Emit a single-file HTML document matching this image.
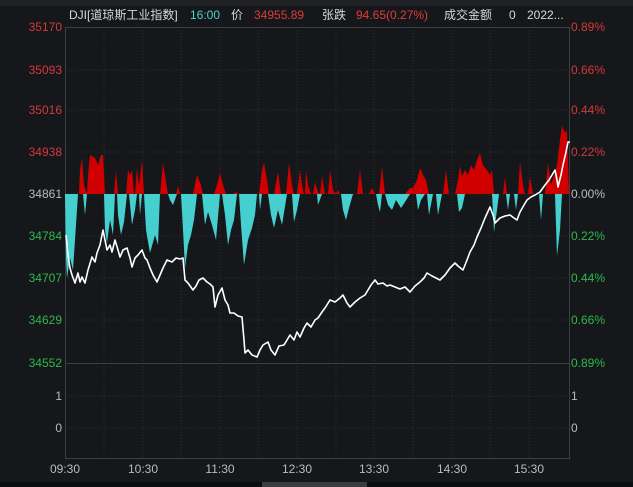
<!DOCTYPE html><html><head><meta charset="utf-8"><style>
body{margin:0;width:633px;height:487px;background:#15171b;overflow:hidden;font-family:"Liberation Sans","Noto Sans CJK SC",sans-serif;}
svg{position:absolute;left:0;top:0}
</style></head><body>
<svg width="633" height="487" viewBox="0 0 633 487" font-family="Liberation Sans, Noto Sans CJK SC, sans-serif" font-size="12">
<rect x="0" y="0" width="633" height="6" fill="#1e2024"/>
<rect x="0" y="482" width="633" height="5" fill="#0c0d0f"/>
<rect x="262" y="482" width="105" height="5" fill="#3a3c40"/>
<g stroke="#2c3036" stroke-dasharray="1 2" stroke-width="1">
<line x1="65" y1="70" x2="569" y2="70"/><line x1="65" y1="110" x2="569" y2="110"/><line x1="65" y1="152" x2="569" y2="152"/><line x1="65" y1="194" x2="569" y2="194"/><line x1="65" y1="236" x2="569" y2="236"/><line x1="65" y1="278" x2="569" y2="278"/><line x1="65" y1="320" x2="569" y2="320"/><line x1="65" y1="396" x2="569" y2="396"/><line x1="65" y1="428" x2="569" y2="428"/>
<line x1="104" y1="27" x2="104" y2="459"/><line x1="143" y1="27" x2="143" y2="459"/><line x1="181" y1="27" x2="181" y2="459"/><line x1="220" y1="27" x2="220" y2="459"/><line x1="258" y1="27" x2="258" y2="459"/><line x1="297" y1="27" x2="297" y2="459"/><line x1="336" y1="27" x2="336" y2="459"/><line x1="374" y1="27" x2="374" y2="459"/><line x1="413" y1="27" x2="413" y2="459"/><line x1="452" y1="27" x2="452" y2="459"/><line x1="490" y1="27" x2="490" y2="459"/><line x1="529" y1="27" x2="529" y2="459"/>
</g>
<rect x="65.5" y="27.5" width="504" height="431" fill="none" stroke="#3a3e45"/>
<line x1="65" y1="363.5" x2="569" y2="363.5" stroke="#3a3e45"/>
<polygon fill="#d00000" points="79,194 80,170 82,158 84,185 87,194 88,175 90,155 95,158 98,165 101,155 103,155 105,194 114,194 116,170 118,194 126,194 128,170 130,175 132,170 134,194 135,194 137,168 139,185 142,160 144,194 160,194 163,163 166,182 168,194 176,194 178,186 180,194 193,194 197,175 201,185 203,194 214,194 217,185 220,173 223,185 226,194 233,194 236,192 239,194 259,194 262,170 264,163 267,180 269,194 274,194 278,172 281,194 286,194 289,163 292,185 294,194 297,194 300,170 302,185 304,194 305,194 306,170 308,185 311,194 313,194 315,182 318,192 320,194 322,176 325,194 328,194 330,170 333,190 336,194 338,190 340,194 357,194 360,170 363,194 369,194 372,188 375,194 379,194 382,167 385,194 405,194 410,188 413,188 417,180 420,168 423,175 426,180 429,194 443,194 446,170 449,194 455,194 458,180 460,166 462,176 465,170 468,175 471,165 474,170 477,160 480,153 483,165 487,170 490,175 492,170 494,194 503,194 505,177 507,194 518,194 520,162 523,185 525,194 528,194 530,177 533,194 545,194 548,163 551,185 554,176 557,165 560,140 562,126 565,133 567,130 569,194"/>
<polygon fill="#45cfcf" points="65,194 66,260 67,278 70,258 73,270 75,240 78,194 83,194 85,215 87,194 104,194 105,230 107,243 110,220 113,235 115,194 117,194 118,215 121,235 124,222 127,194 129,194 132,225 135,210 137,194 139,194 140,215 142,194 144,194 146,230 150,253 155,235 158,245 160,194 168,194 170,200 173,205 177,194 181,194 183,230 185,268 188,245 191,235 194,220 197,194 202,194 205,225 208,212 212,225 216,240 220,194 222,194 225,215 228,245 231,230 234,220 237,194 239,194 241,225 244,265 248,240 252,228 255,215 257,194 259,194 260,210 262,194 268,194 271,215 274,228 278,210 282,225 287,194 292,194 294,222 297,210 300,194 317,194 318,205 322,194 341,194 343,210 346,220 349,208 353,194 376,194 378,205 380,212 382,194 385,194 388,205 392,210 396,200 401,208 405,202 410,194 416,194 418,210 421,200 425,194 427,194 429,215 433,194 436,194 438,215 442,194 457,194 459,212 462,208 465,194 492,194 494,232 497,210 499,194 506,194 508,210 510,194 514,194 516,210 518,194 539,194 541,220 543,194 555,194 557,256 560,230 562,194"/>
<polyline fill="none" stroke="#ffffff" stroke-width="1.6" stroke-linejoin="round" points="66,235 68,255 70,268 72,275 75,283 78,273 80,282 82,277 85,283 88,270 92,257 95,262 97,253 100,245 103,230 105,240 107,250 110,245 112,252 115,240 118,250 120,257 123,250 127,248 130,258 132,267 135,258 138,255 142,250 145,258 147,260 150,268 153,275 157,282 160,275 163,268 167,260 172,262 176,258 180,259 183,258 185,280 188,283 193,290 196,286 199,280 203,278 207,282 210,284 213,287 215,307 218,295 222,288 225,300 228,305 230,313 234,313 238,316 242,317 244,340 245,353 248,350 252,355 257,357 260,350 263,345 268,342 271,350 275,355 279,346 284,345 290,335 294,340 297,332 300,337 304,328 307,323 311,327 315,320 318,318 322,312 325,308 330,300 335,302 340,298 343,295 347,303 350,307 355,302 360,298 365,295 368,290 371,285 375,280 378,284 383,283 387,286 390,285 395,287 400,289 405,287 410,292 415,286 420,282 424,278 427,273 432,276 436,278 440,280 445,275 450,268 455,263 458,266 463,270 467,260 470,252 474,245 477,237 481,228 485,218 490,207 493,215 495,223 500,218 505,216 510,215 514,218 517,220 520,212 524,205 527,200 531,197 535,195 540,192 545,185 549,180 552,175 555,170 557,180 558,187 561,175 563,165 566,152 568,142 570,142"/>
<g font-size="12">
<text x="69" y="19" fill="#d8d8d8">DJI[道琼斯工业指数]</text>
<text x="190" y="19" fill="#4fd0d0">16:00</text>
<text x="231" y="19" fill="#d8d8d8">价</text>
<text x="254" y="19" fill="#e03c3c">34955.89</text>
<text x="322" y="19" fill="#d8d8d8">张跌</text>
<text x="356" y="19" fill="#e03c3c">94.65(0.27%)</text>
<text x="444" y="19" fill="#d8d8d8">成交金额</text>
<text x="509" y="19" fill="#d8d8d8">0</text>
<text x="527" y="19" fill="#d8d8d8">2022...</text>
</g>
<g font-size="12" text-anchor="end">
<text x="62" y="31" fill="#d23a3a">35170</text><text x="62" y="74" fill="#d23a3a">35093</text><text x="62" y="114" fill="#d23a3a">35016</text><text x="62" y="156" fill="#d23a3a">34938</text>
<text x="62" y="198" fill="#bbbbbb">34861</text>
<text x="62" y="240" fill="#2fb84a">34784</text><text x="62" y="282" fill="#2fb84a">34707</text><text x="62" y="324" fill="#2fb84a">34629</text><text x="62" y="367" fill="#2fb84a">34552</text>
<text x="62" y="400" fill="#bbbbbb">1</text><text x="62" y="432" fill="#bbbbbb">0</text>
</g>
<g font-size="12">
<text x="571" y="31" fill="#d23a3a">0.89%</text><text x="571" y="74" fill="#d23a3a">0.66%</text><text x="571" y="114" fill="#d23a3a">0.44%</text><text x="571" y="156" fill="#d23a3a">0.22%</text>
<text x="571" y="198" fill="#bbbbbb">0.00%</text>
<text x="571" y="240" fill="#2fb84a">0.22%</text><text x="571" y="282" fill="#2fb84a">0.44%</text><text x="571" y="324" fill="#2fb84a">0.66%</text><text x="571" y="367" fill="#2fb84a">0.89%</text>
<text x="571" y="400" fill="#bbbbbb">1</text><text x="571" y="432" fill="#bbbbbb">0</text>
</g>
<g font-size="12" fill="#bbbbbb" text-anchor="middle">
<text x="65" y="473">09:30</text><text x="143" y="473">10:30</text><text x="220" y="473">11:30</text><text x="297" y="473">12:30</text><text x="374" y="473">13:30</text><text x="452" y="473">14:30</text><text x="529" y="473">15:30</text>
</g>
</svg>
</body></html>
